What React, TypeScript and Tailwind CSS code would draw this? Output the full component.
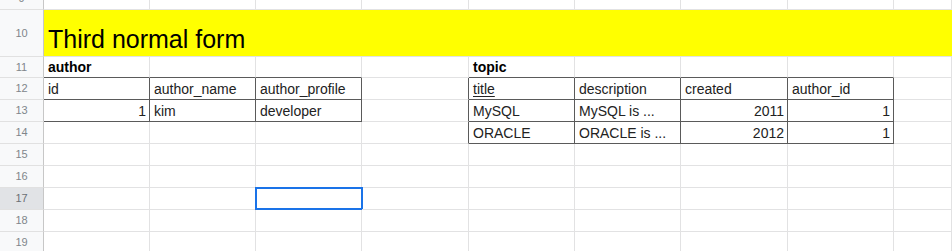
import React from "react";

type Cell = {
  text?: string;
  align?: "left" | "right";
  bold?: boolean;
  underline?: boolean;
  table?: boolean;
  darkBottom?: boolean;
  darkRight?: boolean;
  selected?: boolean;
};

const COLS = ["w-[106px]", "w-[106px]", "w-[106px]", "w-[107px]", "w-[106px]", "w-[106px]", "w-[107px]", "w-[106px]", "flex-1"];

function row(cells: Record<number, Cell>): Cell[] {
  const r: Cell[] = [];
  for (let i = 0; i < 9; i++) r.push(cells[i] || {});
  return r;
}

const rows: { n: number; h: string; cells: Cell[]; active?: boolean }[] = [
  { n: 11, h: "h-[21px]", cells: row({ 0: { text: "author", bold: true, darkBottom: true }, 1: { darkBottom: true }, 2: { darkBottom: true }, 4: { text: "topic", bold: true, darkBottom: true }, 5: { darkBottom: true }, 6: { darkBottom: true }, 7: { darkBottom: true } }) },
  { n: 12, h: "h-[22px]", cells: row({ 0: { text: "id", table: true }, 1: { text: "author_name", table: true }, 2: { text: "author_profile", table: true }, 3: { darkRight: true }, 4: { text: "title", underline: true, table: true }, 5: { text: "description", table: true }, 6: { text: "created", table: true }, 7: { text: "author_id", table: true } }) },
  { n: 13, h: "h-[22px]", cells: row({ 0: { text: "1", align: "right", table: true }, 1: { text: "kim", table: true }, 2: { text: "developer", table: true }, 3: { darkRight: true }, 4: { text: "MySQL", table: true }, 5: { text: "MySQL is ...", table: true }, 6: { text: "2011", align: "right", table: true }, 7: { text: "1", align: "right", table: true } }) },
  { n: 14, h: "h-[22px]", cells: row({ 3: { darkRight: true }, 4: { text: "ORACLE", table: true }, 5: { text: "ORACLE is ...", table: true }, 6: { text: "2012", align: "right", table: true }, 7: { text: "1", align: "right", table: true } }) },
  { n: 15, h: "h-[22px]", cells: row({}) },
  { n: 16, h: "h-[22px]", cells: row({}) },
  { n: 17, h: "h-[22px]", cells: row({ 2: { selected: true } }), active: true },
  { n: 18, h: "h-[22px]", cells: row({}) },
  { n: 19, h: "h-[22px]", cells: row({}) },
];

function RowHeader({ n, h, active }: { n: number; h: string; active?: boolean }) {
  return (
    <div
      className={`${h} w-[44px] shrink-0 flex items-center justify-center border-r border-b border-r-[#c7c7c7] border-b-[#e1e1e1] text-[11px] ${
        active ? "bg-[#e1e3e6] text-[#6b7075]" : "bg-[#f8f9fa] text-[#80868b]"
      }`}
    >
      {n}
    </div>
  );
}

function GridCell({ c, w }: { c: Cell; w: string }) {
  const rightDark = c.table || c.darkRight;
  const bottomDark = c.table || c.darkBottom;
  return (
    <div
      className={`${w} relative h-full shrink-0 flex items-end border-r border-b ${rightDark ? "border-r-[#5a5a5a]" : "border-r-[#e2e2e3]"} ${
        bottomDark ? "border-b-[#5a5a5a]" : "border-b-[#e2e2e3]"
      } ${c.align === "right" ? "justify-end pr-[3px]" : "justify-start pl-[4px]"} pb-[2px]`}
    >
      {c.text && (
        <span
          className={`whitespace-nowrap text-[14px] leading-[16px] ${c.bold ? "font-bold text-black" : "text-[#222222]"} ${
            c.underline ? "underline underline-offset-2" : ""
          }`}
        >
          {c.text}
        </span>
      )}
      {c.selected && <div className="absolute -left-[1px] -top-[1px] w-[108px] h-[23px] border-2 border-[#1a73e8]" />}
    </div>
  );
}

export default function App() {
  return (
    <div className="w-[952px] h-[251px] overflow-hidden bg-white" style={{ fontFamily: '"Liberation Sans", Arial, sans-serif' }}>
      <div className="-mt-[12px] flex flex-col">
        <div className="flex h-[22px]">
          <RowHeader n={9} h="h-[22px]" />
          {COLS.map((w, i) => (
            <GridCell key={i} c={{}} w={w} />
          ))}
        </div>
        <div className="flex h-[47px]">
          <RowHeader n={10} h="h-[47px]" />
          <div className="flex-1 h-full bg-[#ffff00] border-b border-b-[#e2e2e3] flex items-end pl-[4px] pb-[3px]">
            <span className="text-[25px] leading-[28px] text-black whitespace-nowrap">Third normal form</span>
          </div>
        </div>
        {rows.map((r) => (
          <div key={r.n} className={`flex ${r.h}`}>
            <RowHeader n={r.n} h={r.h} active={r.active} />
            {r.cells.map((c, i) => (
              <GridCell key={i} c={c} w={COLS[i]} />
            ))}
          </div>
        ))}
      </div>
    </div>
  );
}
